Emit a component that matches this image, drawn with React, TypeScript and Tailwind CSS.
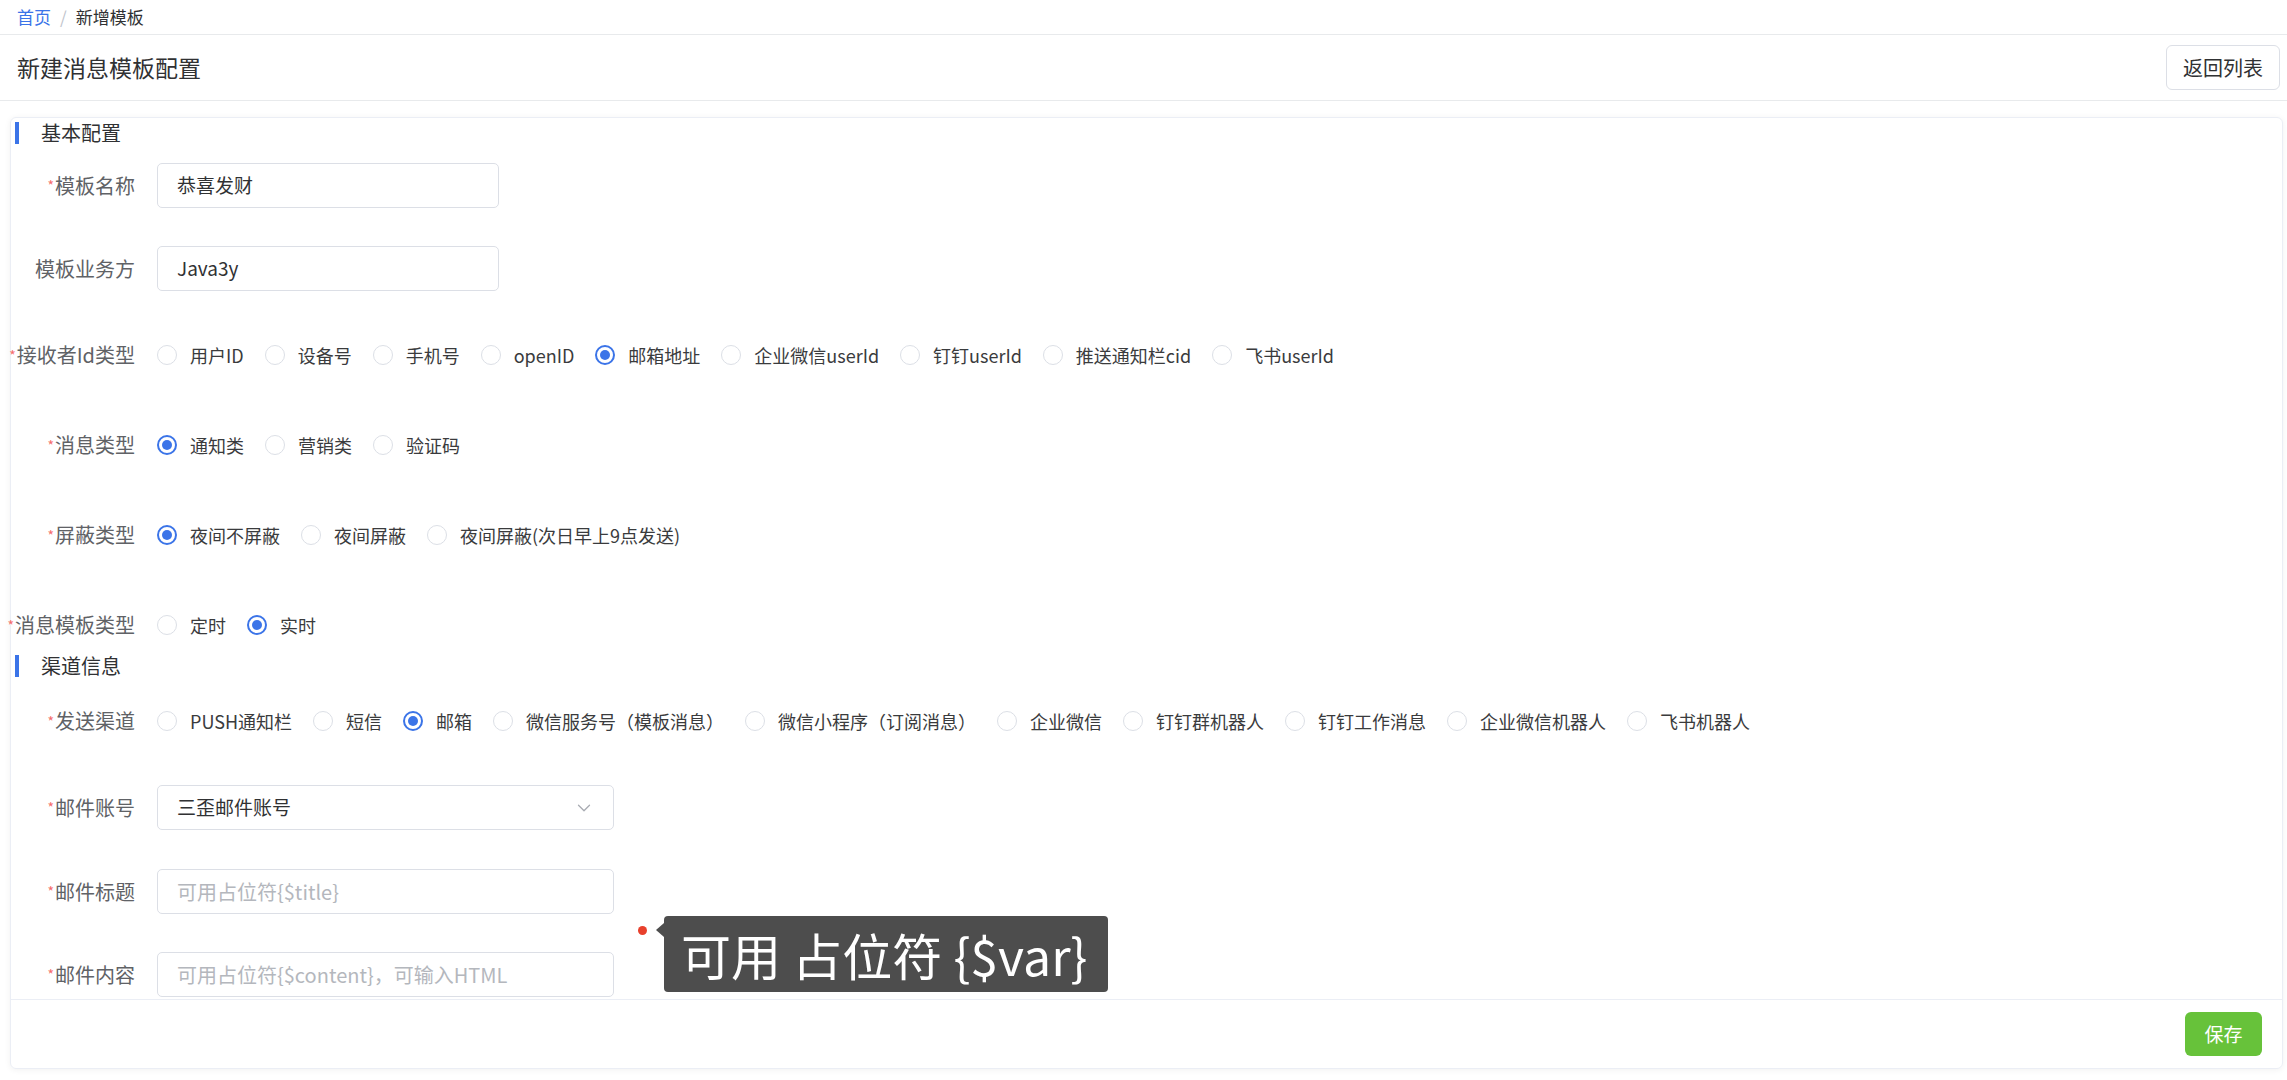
import { ChevronDown } from "lucide-react";

const RECEIVER_TYPES = ["用户ID", "设备号", "手机号", "openID", "邮箱地址", "企业微信userId", "钉钉userId", "推送通知栏cid", "飞书userId"];
const MSG_TYPES = ["通知类", "营销类", "验证码"];
const SHIELD_TYPES = ["夜间不屏蔽", "夜间屏蔽", "夜间屏蔽(次日早上9点发送)"];
const TEMPLATE_TYPES = ["定时", "实时"];
const CHANNELS = ["PUSH通知栏", "短信", "邮箱", "微信服务号（模板消息）", "微信小程序（订阅消息）", "企业微信", "钉钉群机器人", "钉钉工作消息", "企业微信机器人", "飞书机器人"];

function SectionTitle({ title, className }: { title: string; className?: string }) {
    return (
        <div className={`flex items-center h-[22px] ${className ?? ""}`}>
            <div className="ml-[4px] w-[4px] h-[22px] bg-[#3b74e8]" />
            <span className="ml-[22px] text-[20px] text-[#303133] leading-none">{title}</span>
        </div>
    );
}

function FormItem({ label, required, height, className, children }: { label: string; required?: boolean; height: string; className?: string; children: React.ReactNode }) {
    return (
        <div className={`flex items-center ${height} ${className ?? ""}`}>
            <div className="w-[146px] shrink-0 pr-[22px] flex justify-end items-center whitespace-nowrap text-[20px] text-[#606266]">
                {required && <span className="text-[#f56c6c] text-[14px] mr-[1px]">*</span>}
                {label}
            </div>
            {children}
        </div>
    );
}

function RadioGroup({ options, value }: { options: string[]; value: string }) {
    return (
        <div className="flex items-center">
            {options.map((opt) => {
                const checked = opt === value;
                return (
                    <label key={opt} className="flex items-center mr-[21px] cursor-pointer">
                        {checked ? (
                            <span className="w-[20px] h-[20px] rounded-full border-2 border-[#3b74e8] flex items-center justify-center">
                                <span className="w-[10px] h-[10px] rounded-full bg-[#3b74e8]" />
                            </span>
                        ) : (
                            <span className="w-[20px] h-[20px] rounded-full border border-[#dcdfe6] bg-white" />
                        )}
                        <span className="ml-[13px] text-[18px] text-[#3a3b3d] whitespace-nowrap">{opt}</span>
                    </label>
                );
            })}
        </div>
    );
}

function TextInput({ value, placeholder, wide }: { value?: string; placeholder?: string; wide?: boolean }) {
    return (
        <div className={`${wide ? "w-[457px]" : "w-[342px]"} h-[45px] border border-[#dcdfe6] rounded-[5px] flex items-center px-[19px] text-[19px]`}>
            {value ? <span className="text-[#303133]">{value}</span> : <span className="text-[#b4b7bd] text-[20px]">{placeholder}</span>}
        </div>
    );
}

export default function App() {
    return (
        <div className="w-[2287px] h-[1080px] bg-white relative overflow-hidden font-['Noto_Sans_CJK_SC',sans-serif]">
            {/* 面包屑 */}
            <div className="h-[35px] border-b border-[#e8eaec] flex items-center px-[17px] text-[17px]">
                <span className="text-[#3b74e8]">首页</span>
                <span className="mx-[9px] text-[#c0c4cc]">/</span>
                <span className="text-[#303133]">新增模板</span>
            </div>

            {/* 标题栏 */}
            <div className="h-[66px] border-b border-[#e8eaec] flex items-center justify-between pl-[17px] pr-[7px]">
                <h1 className="text-[23px] text-[#303133]">新建消息模板配置</h1>
                <button className="w-[114px] h-[45px] border border-[#dcdfe6] rounded-[6px] bg-white text-[20px] text-[#303133]">
                    返回列表
                </button>
            </div>

            <div className="pt-[16px] pl-[10px] pr-[4px]">
                <div className="h-[952px] border border-[#ebeef5] rounded-[6px] shadow-[0_1px_6px_rgba(0,0,0,0.06)] flex flex-col">
                    <div className="flex-1 pt-[4px]">
                        <SectionTitle title="基本配置" className="mb-[19px]" />
                        <FormItem label="模板名称" required height="h-[45px]" className="mb-[38px]">
                            <TextInput value="恭喜发财" />
                        </FormItem>
                        <FormItem label="模板业务方" height="h-[45px]" className="mb-[38px]">
                            <TextInput value="Java3y" />
                        </FormItem>
                        <FormItem label="接收者Id类型" required height="h-[52px]" className="mb-[38px]">
                            <RadioGroup options={RECEIVER_TYPES} value="邮箱地址" />
                        </FormItem>
                        <FormItem label="消息类型" required height="h-[52px]" className="mb-[38px]">
                            <RadioGroup options={MSG_TYPES} value="通知类" />
                        </FormItem>
                        <FormItem label="屏蔽类型" required height="h-[52px]" className="mb-[38px]">
                            <RadioGroup options={SHIELD_TYPES} value="夜间不屏蔽" />
                        </FormItem>
                        <FormItem label="消息模板类型" required height="h-[52px]" className="mb-[4px]">
                            <RadioGroup options={TEMPLATE_TYPES} value="实时" />
                        </FormItem>

                        <SectionTitle title="渠道信息" className="mb-[18px]" />
                        <FormItem label="发送渠道" required height="h-[52px]" className="mb-[38px]">
                            <RadioGroup options={CHANNELS} value="邮箱" />
                        </FormItem>
                        <FormItem label="邮件账号" required height="h-[45px]" className="mb-[39px]">
                            <div className="w-[457px] h-[45px] border border-[#dcdfe6] rounded-[5px] flex items-center justify-between pl-[19px] pr-[18px] text-[19px] text-[#303133]">
                                <span>三歪邮件账号</span>
                                <ChevronDown size={22} strokeWidth={1.4} className="text-[#a8abb2]" />
                            </div>
                        </FormItem>
                        <FormItem label="邮件标题" required height="h-[45px]" className="mb-[38px]">
                            <TextInput placeholder="可用占位符{$title}" wide />
                        </FormItem>
                        <FormItem label="邮件内容" required height="h-[45px]">
                            <TextInput placeholder="可用占位符{$content}，可输入HTML" wide />
                        </FormItem>
                    </div>

                    <div className="h-[69px] border-t border-[#ebeef5] flex items-center justify-end pr-[20px]">
                        <button className="w-[77px] h-[44px] rounded-[6px] bg-[#67c23a] text-white text-[19px]">保存</button>
                    </div>
                </div>
            </div>

            {/* 提示浮层 */}
            <div className="absolute left-[638px] top-[926px] w-[9px] h-[9px] rounded-full bg-[#e8402c]" />
            <div className="absolute left-[664px] top-[916px] w-[444px] h-[76px] bg-[#4d4d4d] rounded-[4px] flex items-center pl-[17px] text-white text-[50px] leading-none whitespace-nowrap">
                <span className="absolute -left-[8px] top-[7px] w-0 h-0 border-y-[7px] border-y-transparent border-r-[8px] border-r-[#4d4d4d]" />
                可用 占位符 {"{$var}"}
            </div>
        </div>
    );
}
